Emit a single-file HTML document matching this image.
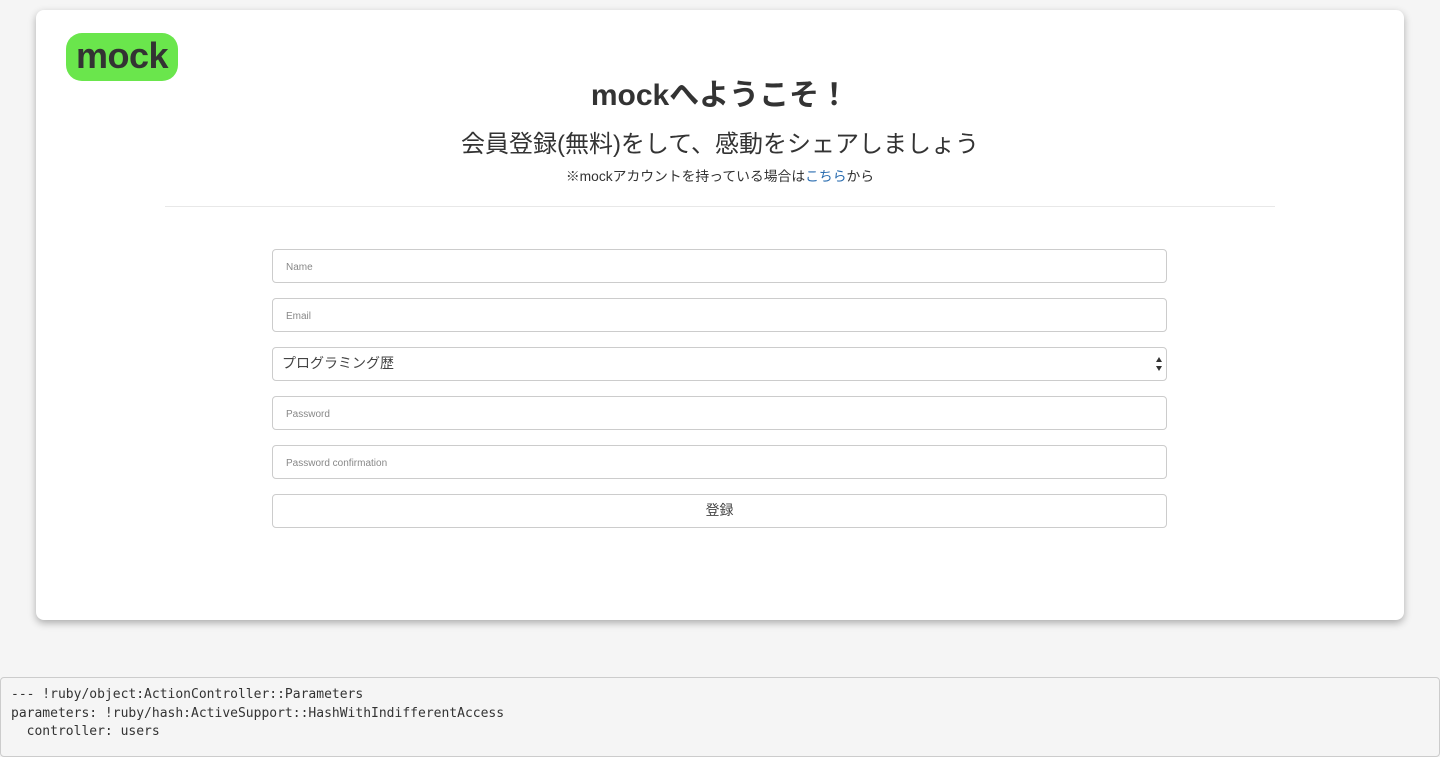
<!DOCTYPE html>
<html><head><meta charset="utf-8"><style>
*{box-sizing:border-box}
body{margin:0;width:1440px;height:741px;overflow:hidden;background:#f5f5f5;font-family:"Liberation Sans","Noto Sans CJK JP",sans-serif;color:#333}
.card{position:absolute;left:36px;top:10px;width:1368px;height:610px;background:#fff;border-radius:8px;box-shadow:0 3px 8px rgba(0,0,0,.3)}
.logo{position:absolute;left:30px;top:23px;width:112px;height:48px;background:#6ae64c;border-radius:16px;font-weight:bold;font-size:36px;line-height:46px;text-align:center;color:#333;letter-spacing:-0.5px}
.h1{position:absolute;left:0;right:0;top:60px;text-align:center;font-size:30px;font-weight:bold}
.h2{position:absolute;left:0;right:0;top:114px;text-align:center;font-size:24px}
.h3{position:absolute;left:0;right:0;top:155px;text-align:center;font-size:13.8px}
.h3 a{color:#2a6db0;text-decoration:none}
.hr{position:absolute;left:129px;width:1110px;top:196px;border-top:1px solid #e8e8e8}
.f{position:absolute;left:236px;width:895px;height:34px;border:1px solid #ccc;border-radius:4px;font-size:10px;color:#888;padding-left:13px;line-height:36px}
.sel{font-size:14px;color:#444;padding-left:9px;line-height:31px}
.sel:after{content:"";position:absolute;right:4px;top:9px;border:3.5px solid transparent;border-bottom:5px solid #333;border-top:0}
.sel:before{content:"";position:absolute;right:4px;top:18px;border:3.5px solid transparent;border-top:5px solid #333;border-bottom:0}
.btn{text-align:center;padding:0;font-size:14px;color:#444;line-height:30px}
pre{position:absolute;left:0;top:677px;width:1440px;height:80px;margin:0;background:#f5f5f5;border:1px solid #ccc;border-radius:4px;padding:8px 10px;font-family:"DejaVu Sans Mono","Liberation Mono",monospace;font-size:13px;line-height:18.5px;color:#333}
</style></head><body>
<div class="card">
<div class="logo">mock</div>
<div class="h1">mockへようこそ！</div>
<div class="h2">会員登録(無料)をして、感動をシェアしましょう</div>
<div class="h3">※mockアカウントを持っている場合は<a>こちら</a>から</div>
<div class="hr"></div>
<div class="f" style="top:239px">Name</div>
<div class="f" style="top:288px">Email</div>
<div class="f sel" style="top:337px">プログラミング歴</div>
<div class="f" style="top:386px">Password</div>
<div class="f" style="top:435px">Password confirmation</div>
<div class="f btn" style="top:484px">登録</div>
</div>
<pre>--- !ruby/object:ActionController::Parameters
parameters: !ruby/hash:ActiveSupport::HashWithIndifferentAccess
  controller: users</pre>
</body></html>
